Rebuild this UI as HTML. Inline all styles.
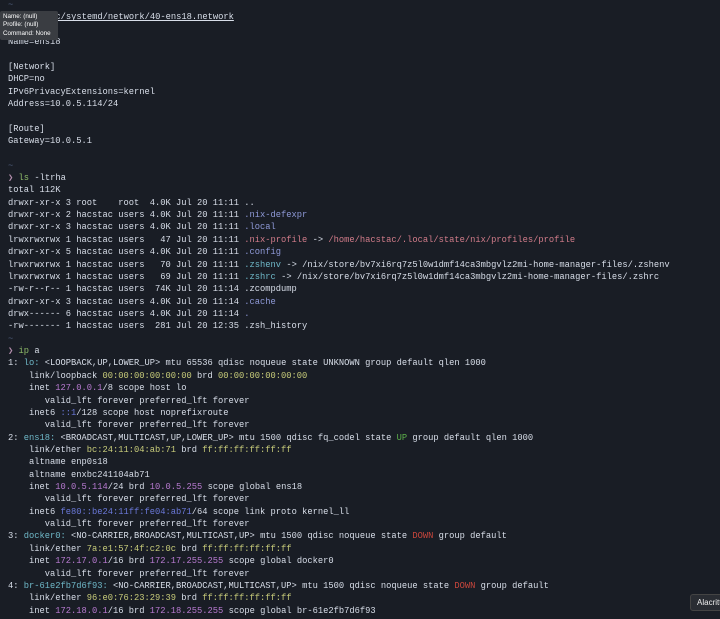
<!DOCTYPE html>
<html><head><meta charset="utf-8"><style>
html,body{margin:0;padding:0;background:#191d25;width:720px;height:619px;overflow:hidden;}
pre{margin:0;position:absolute;left:8px;top:-1px;font-family:"Liberation Mono","DejaVu Sans Mono",monospace;font-size:8.75px;line-height:12.36px;color:#d8dee9;}
.t{color:#4c5a78}.p{color:#b48ead}.g{color:#8fbc6a}.b{color:#8f9ad8}.r{color:#d27c8a}.c{color:#6fb8c8}
.y{color:#c8cc7a}.m{color:#b77ad0}.bl{color:#6a78d8}.up{color:#5cb04a}.dn{color:#c8463c}
u{text-decoration:underline}
.tip{position:absolute;left:0;top:11px;width:58px;height:29px;background:#3a3d42;border-radius:2px;color:#fff;font-family:"Liberation Sans",sans-serif;font-size:6.3px;line-height:8.3px;padding:2px 3px;box-sizing:border-box;}
.al{position:absolute;left:690px;top:594px;width:40px;height:15px;background:#2a2d33;border:1px solid #444;border-radius:3px;color:#eee;font-family:"Liberation Sans",sans-serif;font-size:8px;line-height:15px;padding-left:6px;}
</style></head><body>
<pre><span class="t">~</span>
<span class="p">❯</span> <span class="g">cat</span> <u>/etc/systemd/network/40-ens18.network</u>
[Match]
Name=ens18

[Network]
DHCP=no
IPv6PrivacyExtensions=kernel
Address=10.0.5.114/24

[Route]
Gateway=10.0.5.1

<span class="t">~</span>
<span class="p">❯</span> <span class="g">ls</span> -ltrha
total 112K
drwxr-xr-x 3 root    root  4.0K Jul 20 11:11 ..
drwxr-xr-x 2 hacstac users 4.0K Jul 20 11:11 <span class="b">.nix-defexpr</span>
drwxr-xr-x 3 hacstac users 4.0K Jul 20 11:11 <span class="b">.local</span>
lrwxrwxrwx 1 hacstac users   47 Jul 20 11:11 <span class="r">.nix-profile</span> -&gt; <span class="r">/home/hacstac/.local/state/nix/profiles/profile</span>
drwxr-xr-x 5 hacstac users 4.0K Jul 20 11:11 <span class="b">.config</span>
lrwxrwxrwx 1 hacstac users   70 Jul 20 11:11 <span class="c">.zshenv</span> -&gt; /nix/store/bv7xi6rq7z5l0w1dmf14ca3mbgvlz2mi-home-manager-files/.zshenv
lrwxrwxrwx 1 hacstac users   69 Jul 20 11:11 <span class="c">.zshrc</span> -&gt; /nix/store/bv7xi6rq7z5l0w1dmf14ca3mbgvlz2mi-home-manager-files/.zshrc
-rw-r--r-- 1 hacstac users  74K Jul 20 11:14 .zcompdump
drwxr-xr-x 3 hacstac users 4.0K Jul 20 11:14 <span class="b">.cache</span>
drwx------ 6 hacstac users 4.0K Jul 20 11:14 <span class="b">.</span>
-rw------- 1 hacstac users  281 Jul 20 12:35 .zsh_history
<span class="t">~</span>
<span class="p">❯</span> <span class="g">ip</span> a
1: <span class="c">lo:</span> &lt;LOOPBACK,UP,LOWER_UP&gt; mtu 65536 qdisc noqueue state UNKNOWN group default qlen 1000
    link/loopback <span class="y">00:00:00:00:00:00</span> brd <span class="y">00:00:00:00:00:00</span>
    inet <span class="m">127.0.0.1</span>/8 scope host lo
       valid_lft forever preferred_lft forever
    inet6 <span class="bl">::1</span>/128 scope host noprefixroute
       valid_lft forever preferred_lft forever
2: <span class="c">ens18:</span> &lt;BROADCAST,MULTICAST,UP,LOWER_UP&gt; mtu 1500 qdisc fq_codel state <span class="up">UP</span> group default qlen 1000
    link/ether <span class="y">bc:24:11:04:ab:71</span> brd <span class="y">ff:ff:ff:ff:ff:ff</span>
    altname enp0s18
    altname enxbc241104ab71
    inet <span class="m">10.0.5.114</span>/24 brd <span class="m">10.0.5.255</span> scope global ens18
       valid_lft forever preferred_lft forever
    inet6 <span class="bl">fe80::be24:11ff:fe04:ab71</span>/64 scope link proto kernel_ll
       valid_lft forever preferred_lft forever
3: <span class="c">docker0:</span> &lt;NO-CARRIER,BROADCAST,MULTICAST,UP&gt; mtu 1500 qdisc noqueue state <span class="dn">DOWN</span> group default
    link/ether <span class="y">7a:e1:57:4f:c2:0c</span> brd <span class="y">ff:ff:ff:ff:ff:ff</span>
    inet <span class="m">172.17.0.1</span>/16 brd <span class="m">172.17.255.255</span> scope global docker0
       valid_lft forever preferred_lft forever
4: <span class="c">br-61e2fb7d6f93:</span> &lt;NO-CARRIER,BROADCAST,MULTICAST,UP&gt; mtu 1500 qdisc noqueue state <span class="dn">DOWN</span> group default
    link/ether <span class="y">96:e0:76:23:29:39</span> brd <span class="y">ff:ff:ff:ff:ff:ff</span>
    inet <span class="m">172.18.0.1</span>/16 brd <span class="m">172.18.255.255</span> scope global br-61e2fb7d6f93
</pre>
<div class="tip">Name: (null)<br>Profile: (null)<br>Command: None</div>
<div class="al">Alacritty</div>
</body></html>
